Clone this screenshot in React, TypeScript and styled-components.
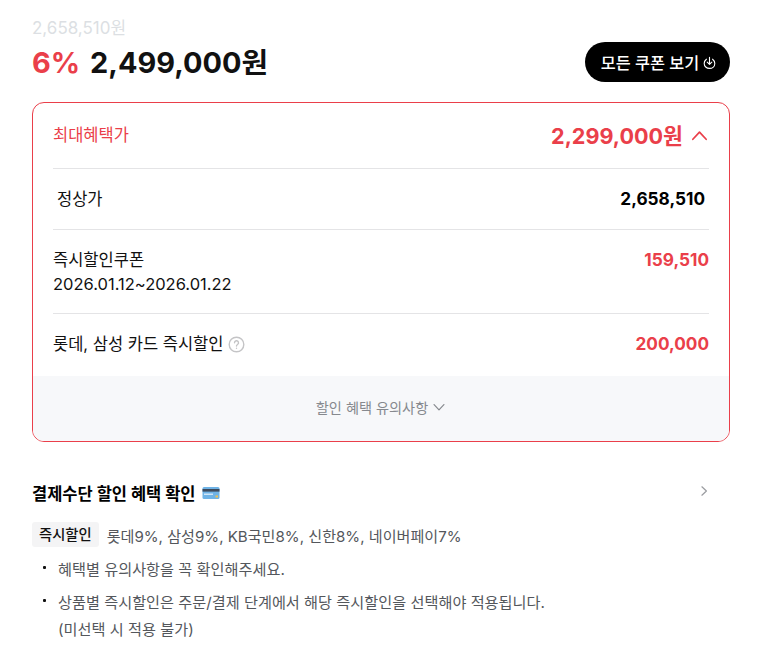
import styled, { createGlobalStyle } from 'styled-components';

const GlobalStyle = createGlobalStyle`
  html, body {
    margin: 0;
    padding: 0;
    background: #fff;
    font-family: Inter, "Noto Sans CJK KR", sans-serif;
  }
  * {
    box-sizing: border-box;
  }
`;

const Page = styled.div`
  width: 768px;
  height: 653px;
  padding: 17px 38px 0 32px;
  overflow: hidden;
`;

const OldPrice = styled.div`
  font-size: 17px;
  line-height: 22px;
  color: #dcdfe3;
`;

const PriceRow = styled.div`
  display: flex;
  align-items: center;
  justify-content: space-between;
  height: 40px;
  margin-top: 3px;
`;

const Prices = styled.div`
  display: flex;
  align-items: center;
  gap: 10px;
  padding-top: 1px;
  font-size: 28.9px;
  font-weight: 700;
  line-height: 38px;
  color: #111;
`;

const Percent = styled.span`
  color: #ea3f4a;
`;

const CouponButton = styled.button`
  display: flex;
  align-items: center;
  justify-content: center;
  gap: 3px;
  width: 145px;
  height: 40px;
  padding: 0 0 0 3px;
  border: 0;
  border-radius: 20px;
  background: #000;
  color: #fff;
  font-family: inherit;
  font-size: 16.3px;
  font-weight: 500;
`;

const Card = styled.section`
  margin-top: 20px;
  height: 340px;
  border: 1px solid #ea3f4a;
  border-radius: 12px;
  overflow: hidden;
`;

const Rows = styled.div`
  height: 273px;
  padding: 0 20px;
`;

const Row = styled.div<{ $height: number; $top?: boolean; $lift?: number }>`
  display: flex;
  justify-content: space-between;
  align-items: ${(p) => (p.$top ? 'flex-start' : 'center')};
  height: ${(p) => p.$height}px;
  padding-top: ${(p) => (p.$top ? '18px' : '0')};
  padding-bottom: ${(p) => p.$lift ?? 0}px;
  border-bottom: 1px solid #e4e4e6;

  &:last-child {
    border-bottom: 0;
  }
`;

const BenefitLabel = styled.span`
  font-size: 16.5px;
  color: #ea3f4a;
`;

const BenefitPrice = styled.div`
  display: flex;
  align-items: center;
  gap: 7px;
  font-size: 21.6px;
  font-weight: 700;
  color: #ea3f4a;
`;

const Label = styled.div<{ $indent?: boolean }>`
  display: flex;
  align-items: center;
  gap: 5px;
  padding-left: ${(p) => (p.$indent ? '4px' : '0')};
  font-size: 16.5px;
  line-height: 24px;
  color: #111;
`;

const Amount = styled.span<{ $red?: boolean; $inset?: boolean }>`
  font-size: 17.2px;
  font-weight: 700;
  line-height: 24px;
  padding-right: ${(p) => (p.$inset ? '4px' : '0')};
  color: ${(p) => (p.$red ? '#ea3f4a' : '#000')};
`;

const CardFooter = styled.div`
  display: flex;
  align-items: center;
  justify-content: center;
  gap: 4px;
  height: 65px;
  padding-bottom: 4px;
  background: #f7f8fa;
  font-size: 14.2px;
  color: #86898e;
`;

const MethodHeader = styled.div`
  display: flex;
  align-items: center;
  justify-content: space-between;
  height: 24px;
  margin-top: 39px;
  padding-right: 20px;
`;

const MethodTitle = styled.h3`
  display: flex;
  align-items: center;
  gap: 6px;
  margin: 0;
  font-size: 16.5px;
  font-weight: 700;
  color: #000;
`;

const MoreArrow = styled.span`
  display: flex;
  margin-bottom: 4px;
`;

const DiscountRow = styled.div`
  display: flex;
  align-items: center;
  gap: 8px;
  margin-top: 17px;
  font-size: 15.1px;
  color: #54575c;
`;

const Tag = styled.span`
  display: block;
  padding: 0 7px;
  height: 25px;
  line-height: 25px;
  border-radius: 3px;
  background: #f4f4f5;
  color: #111;
  font-size: 14.3px;
  font-weight: 500;
`;

const Notes = styled.ul`
  margin: 9px 0 0;
  padding: 0;
  list-style: none;
`;

const Note = styled.li`
  position: relative;
  margin-bottom: 6px;
  padding-left: 26px;
  font-size: 15.2px;
  line-height: 27px;
  color: #54575c;

  &::before {
    content: '';
    position: absolute;
    left: 11px;
    top: 10px;
    width: 3px;
    height: 3px;
    border-radius: 1px;
    background: #111;
  }
`;

function DownloadIcon() {
  return (
    <svg width="15" height="15" viewBox="0 0 15 15" fill="none" stroke="#fff" strokeWidth="1.1" strokeLinecap="round" strokeLinejoin="round">
      <path d="M4.4 4.2A5.3 5.3 0 0 0 2.2 8.4c0 2.9 2.3 5 5.3 5s5.3-2.1 5.3-5a5.3 5.3 0 0 0-2.2-4.2" />
      <path d="M7.5 2.4v6.8M5.2 7.1l2.3 2.3 2.3-2.3" />
    </svg>
  );
}

function Chevron({ size, dir, color, weight }: { size: number; dir: 'up' | 'down' | 'right'; color: string; weight: number }) {
  const d = dir === 'up' ? 'M3 15 10 7.5 17 15' : dir === 'down' ? 'M3 6.5 10 14l7-7.5' : 'M6.5 3 14 10l-7.5 7';
  return (
    <svg width={size} height={size} viewBox="0 0 20 20" fill="none" stroke={color} strokeWidth={weight} strokeLinecap="round" strokeLinejoin="round">
      <path d={d} />
    </svg>
  );
}

function HelpIcon() {
  return (
    <svg width="17" height="17" viewBox="0 0 17 17" fill="none" stroke="#c4c4c6" strokeWidth="1.4" strokeLinecap="round">
      <circle cx="8.5" cy="8.5" r="7.3" />
      <path d="M6.5 6.8a2 2 0 1 1 3 1.7c-.7.4-1 .8-1 1.5" />
      <path d="M8.5 12.2v.1" />
    </svg>
  );
}

function CardEmoji() {
  return (
    <svg width="18" height="14" viewBox="0 0 18 14">
      <rect x="0.5" y="1" width="17" height="12" rx="1.5" fill="#6fb3e6" />
      <rect x="0.5" y="3" width="17" height="2.6" fill="#3d4a5c" />
      <rect x="2" y="7.5" width="9" height="1.5" fill="#cfe6f7" />
      <rect x="13.5" y="9.5" width="2.5" height="2" fill="#f2c14e" />
    </svg>
  );
}

export default function App() {
  return (
    <Page>
      <GlobalStyle />
      <OldPrice>2,658,510원</OldPrice>
      <PriceRow>
        <Prices>
          <Percent>6%</Percent>
          <span>2,499,000원</span>
        </Prices>
        <CouponButton>
          모든 쿠폰 보기
          <DownloadIcon />
        </CouponButton>
      </PriceRow>

      <Card>
        <Rows>
          <Row $height={66} $lift={3}>
            <BenefitLabel>최대혜택가</BenefitLabel>
            <BenefitPrice>
              2,299,000원
              <Chevron size={19} dir="up" color="#ea3f4a" weight={1.8} />
            </BenefitPrice>
          </Row>
          <Row $height={61}>
            <Label $indent>정상가</Label>
            <Amount $inset>2,658,510</Amount>
          </Row>
          <Row $height={84} $top>
            <Label>
              즉시할인쿠폰
              <br />
              2026.01.12~2026.01.22
            </Label>
            <Amount $red>159,510</Amount>
          </Row>
          <Row $height={62} $lift={2}>
            <Label>
              롯데, 삼성 카드 즉시할인
              <HelpIcon />
            </Label>
            <Amount $red>200,000</Amount>
          </Row>
        </Rows>
        <CardFooter>
          할인 혜택 유의사항
          <Chevron size={14} dir="down" color="#86898e" weight={1.7} />
        </CardFooter>
      </Card>

      <MethodHeader>
        <MethodTitle>
          결제수단 할인 혜택 확인
          <CardEmoji />
        </MethodTitle>
        <MoreArrow>
          <Chevron size={12} dir="right" color="#9a9ca0" weight={2} />
        </MoreArrow>
      </MethodHeader>

      <DiscountRow>
        <Tag>즉시할인</Tag>
        롯데9%, 삼성9%, KB국민8%, 신한8%, 네이버페이7%
      </DiscountRow>

      <Notes>
        <Note>혜택별 유의사항을 꼭 확인해주세요.</Note>
        <Note>
          상품별 즉시할인은 주문/결제 단계에서 해당 즉시할인을 선택해야 적용됩니다.
          <br />
          (미선택 시 적용 불가)
        </Note>
      </Notes>
    </Page>
  );
}
